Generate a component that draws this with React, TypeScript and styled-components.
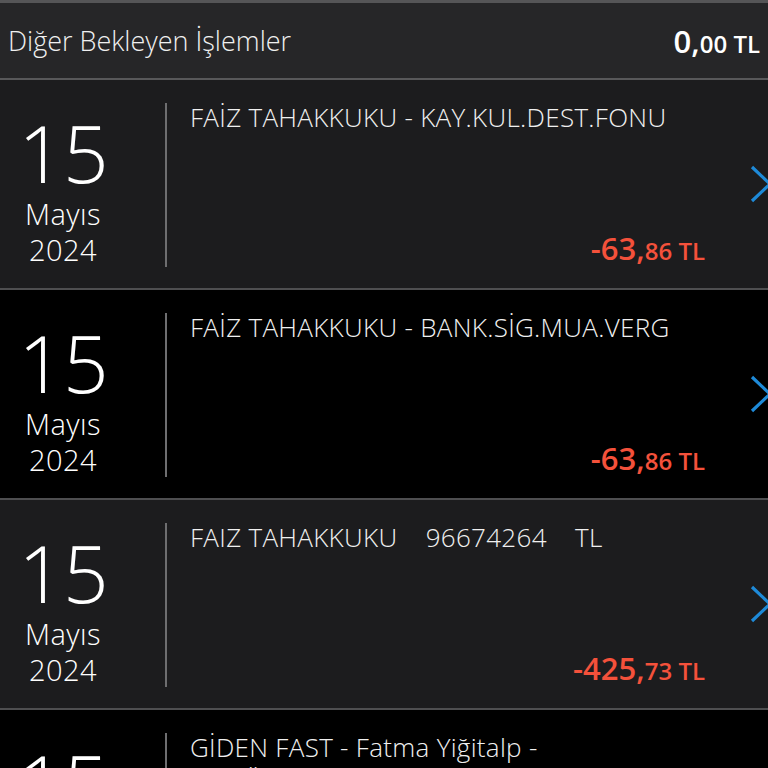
import React from 'react'
import styled, { createGlobalStyle } from 'styled-components'

const GlobalStyle = createGlobalStyle`
    html, body {
        margin: 0;
        padding: 0;
        background: #000;
    }
    body {
        font-family: "Open Sans", "Noto Sans", sans-serif;
        color: #f2f2f2;
    }
`

type Transaction = {
    day: string
    month: string
    year: string
    title: string
    whole: string
    fraction: string
}

const transactions: Transaction[] = [
    { day: '15', month: 'Mayıs', year: '2024', title: 'FAİZ TAHAKKUKU - KAY.KUL.DEST.FONU', whole: '-63,', fraction: '86' },
    { day: '15', month: 'Mayıs', year: '2024', title: 'FAİZ TAHAKKUKU - BANK.SİG.MUA.VERG', whole: '-63,', fraction: '86' },
    { day: '15', month: 'Mayıs', year: '2024', title: 'FAIZ TAHAKKUKU\u00a0\u00a0\u00a0 96674264 \u00a0\u00a0 TL', whole: '-425,', fraction: '73' },
    { day: '15', month: 'Mayıs', year: '2024', title: 'GİDEN FAST - Fatma Yiğitalp - Kira\u00a0Ödemesi\u00a0Mayıs\u00a0Ayı', whole: '-1.000,', fraction: '00' },
]

const Page = styled.div`
    width: 768px;
    height: 768px;
    overflow: hidden;
    background: #000;
`

const Header = styled.div`
    display: flex;
    align-items: center;
    justify-content: space-between;
    height: 75px;
    padding: 0 8px;
    background: #262628;
    border-top: 3px solid #555557;
    border-bottom: 2px solid #58585a;
`

const HeaderTitle = styled.span`
    font-size: 27px;
    font-weight: 300;
    color: #f0f0f0;
`

const HeaderAmount = styled.span`
    font-weight: 600;
    color: #fff;
`

const Big = styled.span<{ size: number }>`
    font-size: ${(p) => p.size}px;
`

const Row = styled.div<{ dark: boolean }>`
    display: grid;
    grid-template-columns: 165px 2px 1fr 63px;
    height: 208px;
    background: ${(p) => (p.dark ? '#000' : '#1c1c1e')};
    border-bottom: 2px solid #4e4e50;
    overflow: hidden;
`

const DateColumn = styled.div`
    display: flex;
    flex-direction: column;
    align-items: center;
    padding-top: 28px;
    padding-right: 39px;
    font-weight: 300;
    color: #fff;
`

const Day = styled.div`
    font-size: 80px;
    line-height: 88px;
    letter-spacing: -1px;
`

const DateLine = styled.div`
    font-size: 29px;
    line-height: 36px;
    letter-spacing: 0.4px;
`

const Divider = styled.div`
    margin: 23px 0 21px;
    background: #6e6e70;
`

const Content = styled.div`
    display: flex;
    flex-direction: column;
    justify-content: space-between;
    padding: 20px 0 16px 23px;
    min-width: 0;
`

const Title = styled.div`
    font-size: 26px;
    line-height: 34px;
    font-weight: 300;
    letter-spacing: 0.3px;
    color: #f0f0f0;
`

const Amount = styled.div`
    align-self: flex-end;
    font-weight: 600;
    color: #f4513b;
    line-height: 36px;
`

const ChevronCell = styled.div`
    display: flex;
    align-items: center;
    padding-left: 45px;
`

const Chevron = () => (
    <svg width="30" height="40" viewBox="0 0 30 40" style={{ flex: 'none' }}>
        <path d="M2 3 L20 20 L2 37" fill="none" stroke="#1e8ad8" strokeWidth="3.2" />
    </svg>
)

const App = () => {
    return (
        <Page>
            <GlobalStyle />
            <Header>
                <HeaderTitle>Diğer Bekleyen İşlemler</HeaderTitle>
                <HeaderAmount>
                    <Big size={31}>0,</Big>
                    <Big size={24}>00 TL</Big>
                </HeaderAmount>
            </Header>
            {transactions.map((t, i) => (
                <Row key={i} dark={i % 2 === 1}>
                    <DateColumn>
                        <Day>{t.day}</Day>
                        <DateLine>{t.month}</DateLine>
                        <DateLine>{t.year}</DateLine>
                    </DateColumn>
                    <Divider />
                    <Content>
                        <Title>{t.title}</Title>
                        <Amount>
                            <Big size={31}>{t.whole}</Big>
                            <Big size={24}>{t.fraction} TL</Big>
                        </Amount>
                    </Content>
                    <ChevronCell>
                        <Chevron />
                    </ChevronCell>
                </Row>
            ))}
        </Page>
    )
}

export default App
